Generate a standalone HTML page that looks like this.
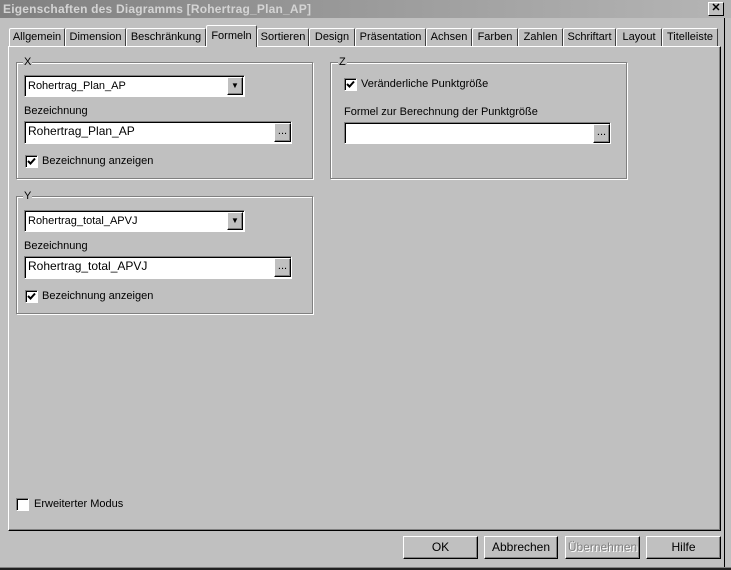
<!DOCTYPE html><html><head><style>
*{margin:0;padding:0;box-sizing:border-box}
body{width:731px;height:570px;background:#c0c0c0;font-family:"Liberation Sans",sans-serif;font-size:11px;color:#000;position:relative;overflow:hidden}
.a{position:absolute;white-space:nowrap}
.title{left:0;top:0;width:731px;height:18px;background:linear-gradient(90deg,#808080,#b5b5b5);color:#d4d4d4;font-weight:bold;font-size:12px;padding:2px 3px;letter-spacing:.2px}
.x{right:7px;top:2px;width:16px;height:14px;background:#c0c0c0;border:1px solid;border-color:#fff #000 #000 #fff;font-size:11px;line-height:11px;text-align:center;font-weight:bold}
.tab{top:28px;height:19px;border:1px solid;border-bottom:none;border-color:#fff #404040 #000 #fff;border-radius:2px 2px 0 0;text-align:center;line-height:17px;background:#c0c0c0}
.sel{top:25px;height:22px;z-index:2;line-height:20px}
.panel{left:8px;top:46px;width:713px;height:485px;border:1px solid;border-color:#fff #000 #000 #fff;box-shadow:inset -1px -1px #808080}
.grp{border:1px solid #808080;box-shadow:1px 1px #fff,inset 1px 1px #fff}
.lg{background:#c0c0c0;padding:0 1px;line-height:12px}
.inp{background:#fff;border:1px solid;border-color:#808080 #fff #fff #808080;box-shadow:inset 1px 1px #000;padding:3px 3px;line-height:14px}
.big{font-size:12px;padding:2px 3px;line-height:15px}
.btn{background:#c0c0c0;border:1px solid;border-color:#fff #000 #000 #fff;box-shadow:inset -1px -1px #808080;text-align:center}
.cb{width:13px;height:13px;background:#fff;border:1px solid;border-color:#808080 #fff #fff #808080;box-shadow:inset 1px 1px #000}
.cb svg{position:absolute;left:1px;top:1px}
.pb{line-height:20px;font-size:12px}
</style></head><body>
<div class="a title">Eigenschaften des Diagramms [Rohertrag_Plan_AP]</div>
<div class="a x">✕</div>
<div class="a" style="left:724px;top:18px;width:7px;height:552px;background:#c0c0c0;border-left:1px solid #000"></div>

<div class="a tab" style="left:9px;width:56px">Allgemein</div>
<div class="a tab" style="left:65px;width:61px">Dimension</div>
<div class="a tab" style="left:126px;width:80px">Beschränkung</div>
<div class="a tab sel" style="left:206px;width:51px">Formeln</div>
<div class="a tab" style="left:257px;width:52px">Sortieren</div>
<div class="a tab" style="left:309px;width:46px">Design</div>
<div class="a tab" style="left:355px;width:71px">Präsentation</div>
<div class="a tab" style="left:426px;width:46px">Achsen</div>
<div class="a tab" style="left:472px;width:46px">Farben</div>
<div class="a tab" style="left:518px;width:45px">Zahlen</div>
<div class="a tab" style="left:563px;width:53px">Schriftart</div>
<div class="a tab" style="left:616px;width:46px">Layout</div>
<div class="a tab" style="left:662px;width:56px">Titelleiste</div>
<div class="a panel"></div>
<div class="a" style="left:207px;top:46px;width:49px;height:2px;background:#c0c0c0;z-index:3"></div>

<div class="a grp" style="left:16px;top:62px;width:297px;height:117px"></div>
<div class="a lg" style="left:23px;top:56px">X</div>
<div class="a inp" style="left:24px;top:75px;width:221px;height:22px">Rohertrag_Plan_AP</div>
<div class="a btn" style="left:227px;top:77px;width:16px;height:18px;font-size:8px;line-height:16px">▼</div>
<div class="a" style="left:24px;top:105px">Bezeichnung</div>
<div class="a inp big" style="left:24px;top:121px;width:268px;height:23px">Rohertrag_Plan_AP</div>
<div class="a btn" style="left:274px;top:123px;width:17px;height:19px;line-height:14px">...</div>
<div class="a cb" style="left:25px;top:155px"><svg width="9" height="9"><path d="M1 4 L3.5 6.5 L8 1.5" stroke="#000" stroke-width="2" fill="none"/></svg></div>
<div class="a" style="left:42px;top:155px">Bezeichnung anzeigen</div>

<div class="a grp" style="left:16px;top:196px;width:297px;height:118px"></div>
<div class="a lg" style="left:23px;top:190px">Y</div>
<div class="a inp" style="left:24px;top:210px;width:221px;height:22px">Rohertrag_total_APVJ</div>
<div class="a btn" style="left:227px;top:212px;width:16px;height:18px;font-size:8px;line-height:16px">▼</div>
<div class="a" style="left:24px;top:240px">Bezeichnung</div>
<div class="a inp big" style="left:24px;top:256px;width:268px;height:23px">Rohertrag_total_APVJ</div>
<div class="a btn" style="left:274px;top:258px;width:17px;height:19px;line-height:14px">...</div>
<div class="a cb" style="left:25px;top:290px"><svg width="9" height="9"><path d="M1 4 L3.5 6.5 L8 1.5" stroke="#000" stroke-width="2" fill="none"/></svg></div>
<div class="a" style="left:42px;top:290px">Bezeichnung anzeigen</div>

<div class="a grp" style="left:330px;top:62px;width:297px;height:117px"></div>
<div class="a lg" style="left:338px;top:56px">Z</div>
<div class="a cb" style="left:344px;top:78px"><svg width="9" height="9"><path d="M1 4 L3.5 6.5 L8 1.5" stroke="#000" stroke-width="2" fill="none"/></svg></div>
<div class="a" style="left:361px;top:78px">Veränderliche Punktgröße</div>
<div class="a" style="left:344px;top:106px">Formel zur Berechnung der Punktgröße</div>
<div class="a inp" style="left:344px;top:122px;width:267px;height:22px"></div>
<div class="a btn" style="left:593px;top:124px;width:17px;height:19px;line-height:14px">...</div>

<div class="a cb" style="left:16px;top:498px"></div>
<div class="a" style="left:34px;top:498px">Erweiterter Modus</div>

<div class="a btn pb" style="left:403px;top:536px;width:75px;height:23px">OK</div>
<div class="a btn pb" style="left:484px;top:536px;width:74px;height:23px">Abbrechen</div>
<div class="a btn pb" style="left:565px;top:536px;width:75px;height:23px;color:#808080;text-shadow:1px 1px #fff">Übernehmen</div>
<div class="a btn pb" style="left:646px;top:536px;width:75px;height:23px">Hilfe</div>
<div class="a" style="left:0;top:567px;width:731px;height:3px;background:#202020;border-top:1px solid #808080"></div>
</body></html>
